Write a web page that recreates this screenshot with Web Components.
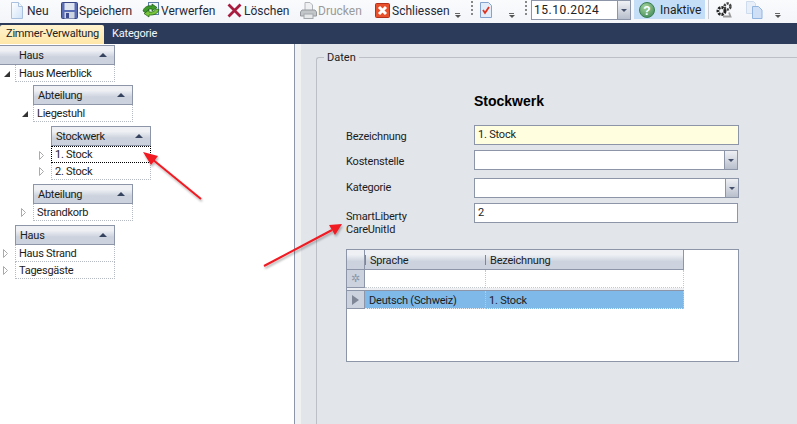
<!DOCTYPE html>
<html>
<head>
<meta charset="utf-8">
<style>
    html, body { margin: 0; padding: 0; }
    body {
        width: 797px;
        height: 424px;
        overflow: hidden;
        position: relative;
        font-family: Roboto, "Noto Sans", sans-serif;
        font-size: 12px;
        color: #1c1c1c;
        background: #e2e5ea;
        display: flex;
        flex-direction: column;
    }
    .arrows { position: absolute; left: 0; top: 0; pointer-events: none; }
</style>
</head>
<body>
<app-toolbar>
    <tool-button label="Neu" icon="new" w="52" style="margin-left:7px"></tool-button>
    <tool-button label="Speichern" icon="save" w="82"></tool-button>
    <tool-button label="Verwerfen" icon="undo" w="83"></tool-button>
    <tool-button label="Löschen" icon="del" w="74"></tool-button>
    <tool-button label="Drucken" icon="print" w="74" disabled></tool-button>
    <tool-button label="Schliessen" icon="close" w="83"></tool-button>
    <tool-grip></tool-grip>
    <tool-sep style="margin-left:10px"></tool-sep>
    <tool-button icon="check" w="20" style="margin-left:3px"></tool-button>
    <tool-grip style="margin-left:13px"></tool-grip>
    <tool-sep style="margin-left:10px"></tool-sep>
    <date-combo value="15.10.2024" style="margin-left:4px"></date-combo>
    <status-button label="Inaktive" style="margin-left:3px"></status-button>
    <tool-line></tool-line>
    <tool-button icon="gears" w="20" style="margin-left:5px"></tool-button>
    <tool-button icon="copy" w="20" style="margin-left:10px"></tool-button>
    <tool-grip style="margin-left:11px"></tool-grip>
</app-toolbar>
<tab-strip>
    <tab-item active>Zimmer-Verwaltung</tab-item>
    <tab-item>Kategorie</tab-item>
</tab-strip>
<main-split>
    <tree-view slot="left">
        <tree-band label="Haus" bleed>
            <tree-row label="Haus Meerblick" state="open">
                <tree-band label="Abteilung" style="margin-top:3px">
                    <tree-row label="Liegestuhl" state="open">
                        <tree-band label="Stockwerk" style="margin-top:4px">
                            <tree-row label="1. Stock" state="closed" focused></tree-row>
                            <tree-row label="2. Stock" state="closed"></tree-row>
                        </tree-band>
                    </tree-row>
                </tree-band>
                <tree-band label="Abteilung" style="margin-top:4px">
                    <tree-row label="Strandkorb" state="closed"></tree-row>
                </tree-band>
            </tree-row>
        </tree-band>
        <tree-band label="Haus" style="margin-top:4px">
            <tree-row label="Haus Strand" state="closed"></tree-row>
            <tree-row label="Tagesgäste" state="closed"></tree-row>
        </tree-band>
    </tree-view>
    <data-panel slot="right">
        <form-title>Stockwerk</form-title>
        <form-row label="Bezeichnung" top="0" lh="24" width="265"><text-box value="1. Stock" required></text-box></form-row>
        <form-row label="Kostenstelle" top="5" lh="24" width="264"><text-box combo></text-box></form-row>
        <form-row label="Kategorie" top="8" lh="20" width="265"><text-box combo></text-box></form-row>
        <form-row label="SmartLiberty CareUnitId" top="5" lh="13" width="264" wrap><text-box value="2"></text-box></form-row>
        <lang-grid></lang-grid>
    </data-panel>
</main-split>

<svg class="arrows" width="797" height="424" viewBox="0 0 797 424">
    <defs>
        <filter id="sh" x="-20%" y="-20%" width="140%" height="140%">
            <feDropShadow dx="1" dy="2" stdDeviation="1.2" flood-color="#000" flood-opacity="0.3"/>
        </filter>
    </defs>
    <g filter="url(#sh)">
        <line x1="201" y1="199" x2="152" y2="159" stroke="#f01a22" stroke-width="2"/>
        <polygon points="143,152 158,156 151,165" fill="#f01a22"/>
        <line x1="264" y1="266" x2="332" y2="230" stroke="#f01a22" stroke-width="2"/>
        <polygon points="342,224 335,235 329,225" fill="#f01a22"/>
    </g>
</svg>

<script>
const ICONS = {
    new: `<svg width="14" height="17" viewBox="0 0 14 17"><defs><linearGradient id="n" x1="0" y1="0" x2="1" y2="1"><stop offset="0" stop-color="#fff"/><stop offset="1" stop-color="#cfe2f7"/></linearGradient></defs><path d="M1.500.5h7l4 4v12h-11z" fill="url(#n)" stroke="#a9c1de"/><path d="M8.500.5v4h4" fill="#f4f8fd" stroke="#a9c1de"/></svg>`,
    save: `<svg width="17" height="17" viewBox="0 0 17 17"><rect x=".5" y=".5" width="16" height="16" rx="1" fill="#5a6db4" stroke="#3a4786"/><rect x="3.500" y="1" width="10" height="7" fill="#dfe5f0"/><rect x="3.500" y="10" width="10" height="6.500" fill="#cfd5e0"/><rect x="5" y="11" width="3" height="5" fill="#3f4d90"/></svg>`,
    undo: `<svg width="18" height="16" viewBox="0 0 18 16"><rect x="6.500" y=".5" width="10" height="12" fill="#eef4fb" stroke="#5f7fa8"/><path d="M1 9c1-4 5-6 9-5V2l5 3.500-5 3.500V7C7 6.500 5 8 4 11z" fill="#3f9a2c" stroke="#17590f" stroke-width=".7"/><path d="M17 7.500c-1 4-5 6-10 5.500v2L2 11.500 7 8v2c4 .5 6-1 7-3z" fill="#78c43c" stroke="#17590f" stroke-width=".7"/></svg>`,
    del: `<svg width="15" height="15" viewBox="0 0 15 15"><path d="M1.500 1.500l12 12M13.500 1.500l-12 12" stroke="#a81c40" stroke-width="2.800"/></svg>`,
    print: `<svg width="17" height="17" viewBox="0 0 17 17"><path d="M5 .5h5l2.500 2.500v6H5z" fill="#eef0f2" stroke="#b2b6ba"/><path d="M2 8h13l1.500 2v4H.5v-4z" fill="#c3c6c9" stroke="#94989c"/><rect x="4" y="12" width="9" height="4.500" fill="#e6e8ea" stroke="#a4a8ac"/></svg>`,
    close: `<svg width="15" height="15" viewBox="0 0 15 15"><rect x=".5" y=".5" width="14" height="14" rx="1" fill="#e8502b" stroke="#b5301a"/><path d="M4 4l7 7M11 4l-7 7" stroke="#fff" stroke-width="3"/></svg>`,
    check: `<svg width="12" height="16" viewBox="0 0 12 16"><path d="M.5.5h8l3 3v12H.5z" fill="#e3edf9" stroke="#86a3cd"/><path d="M3 8l2 3 4-6" fill="none" stroke="#e0331f" stroke-width="1.800"/></svg>`,
    gears: `<svg width="18" height="18" viewBox="0 0 18 18"><circle cx="6.500" cy="10" r="3.500" fill="none" stroke="#222" stroke-width="3" stroke-dasharray="2.200 1"/><circle cx="12.500" cy="5.500" r="3" fill="none" stroke="#444" stroke-width="2.500" stroke-dasharray="2.200 1"/><path d="M8 15.500h7.500l-1.500-4" fill="none" stroke="#9a9a9a" stroke-width="1.800"/></svg>`,
    copy: `<svg width="17" height="18" viewBox="0 0 17 18"><path d="M.5.5h7l2 2v10h-9z" fill="#e8eff9" stroke="#cfdcee"/><path d="M6.500 5.500h6l3.500 3.500v8.500H6.500z" fill="#cfe0f6" stroke="#92b5e0"/></svg>`
};

// toolbar strip
class AppToolbar extends HTMLElement {
    constructor() {
        super();
        this.attachShadow({ mode: 'open' });
        this.shadowRoot.innerHTML = `
            <style>
                :host { display: flex; align-items: flex-start; height: 23px; flex: none;
                    background: linear-gradient(#fafbfd, #f3f5f9); box-sizing: border-box; }
            </style>
            <slot></slot>`;
    }
}
customElements.define('app-toolbar', AppToolbar);

class ToolButton extends HTMLElement {
    constructor() {
        super();
        this.attachShadow({ mode: 'open' });
    }
    connectedCallback() {
        const label = this.getAttribute('label');
        const icon = ICONS[this.getAttribute('icon')] || '';
        const color = this.hasAttribute('disabled') ? '#9a9a9a' : '#1f2a38';
        this.shadowRoot.innerHTML = `
            <style>
                :host { display: flex; align-items: center; height: 20px; width: ${this.getAttribute('w')}px; flex: none; color: ${color}; font-size: 12px; white-space: nowrap; }
                .i { width: 20px; display: flex; justify-content: center; flex: none; }
                span { padding-top: 2px; }
                svg { display: block; }
            </style>
            <div class="i">${icon}</div>${label ? `<span>${label}</span>` : ''}`;
    }
}
customElements.define('tool-button', ToolButton);

class ToolGrip extends HTMLElement {
    constructor() {
        super();
        this.attachShadow({ mode: 'open' });
        this.shadowRoot.innerHTML = `
            <style>
                :host { display: block; width: 6px; height: 20px; position: relative; flex: none; }
                i { position: absolute; left: 0; width: 5px; background: #666; height: 1px; top: 13px; }
                b { position: absolute; left: 0; top: 15px; border: 3px solid transparent; border-top: 3px solid #555; border-bottom: 0; }
            </style>
            <i></i><b></b>`;
    }
}
customElements.define('tool-grip', ToolGrip);

class ToolSep extends HTMLElement {
    constructor() {
        super();
        this.attachShadow({ mode: 'open' });
        this.shadowRoot.innerHTML = `
            <style>
                :host { display: block; width: 2px; height: 15px; margin-top: 1px; flex: none;
                    background: repeating-linear-gradient(#888 0 2px, transparent 2px 4px); }
            </style>`;
    }
}
customElements.define('tool-sep', ToolSep);

class ToolLine extends HTMLElement {
    constructor() {
        super();
        this.attachShadow({ mode: 'open' });
        this.shadowRoot.innerHTML = `
            <style>
                :host { display: block; width: 1px; height: 19px; margin-left: 3px; background: #c9ccd2; flex: none; }
            </style>`;
    }
}
customElements.define('tool-line', ToolLine);

class DateCombo extends HTMLElement {
    constructor() {
        super();
        this.attachShadow({ mode: 'open' });
    }
    connectedCallback() {
        this.shadowRoot.innerHTML = `
            <style>
                :host { display: flex; width: 100px; height: 20px; box-sizing: border-box; background: #fff; flex: none;
                    border: 1px solid #8c96a8; font-size: 12px; color: #222; letter-spacing: .5px; }
                span { flex: 1; padding: 0 0 0 2px; line-height: 18px; }
                b { width: 12px; border-left: 1px solid #8c96a8; background: linear-gradient(#f0f2f5, #b8bfcc);
                    display: flex; align-items: center; justify-content: center; }
                b::after { content: ""; border: 3px solid transparent; border-top: 3px solid #44506c; border-bottom: 0; }
            </style>
            <span>${this.getAttribute('value')}</span><b></b>`;
    }
}
customElements.define('date-combo', DateCombo);

class StatusButton extends HTMLElement {
    constructor() {
        super();
        this.attachShadow({ mode: 'open' });
    }
    connectedCallback() {
        this.shadowRoot.innerHTML = `
            <style>
                :host { display: flex; align-items: center; width: 71px; height: 19px; box-sizing: border-box; padding-left: 5px; gap: 5px; flex: none;
                    background: #c4def8; color: #222; font-size: 12px; }
                span { padding-top: 1px; }
                svg { display: block; }
            </style>
            <svg width="16" height="16" viewBox="0 0 16 16"><defs><radialGradient id="q" cx=".4" cy=".3" r=".8"><stop offset="0" stop-color="#a7d49a"/><stop offset="1" stop-color="#3f8a5a"/></radialGradient></defs><circle cx="8" cy="8" r="7.500" fill="url(#q)" stroke="#3b7f52"/><text x="8" y="12.500" text-anchor="middle" font-family="Liberation Sans" font-size="12" font-weight="bold" fill="#fff">?</text></svg>
            <span>${this.getAttribute('label')}</span>`;
    }
}
customElements.define('status-button', StatusButton);

class TabStrip extends HTMLElement {
    constructor() {
        super();
        this.attachShadow({ mode: 'open' });
        this.shadowRoot.innerHTML = `
            <style>
                :host { display: flex; align-items: flex-end; height: 21px; flex: none; background: #2b3b59; box-sizing: border-box; padding-top: 2px; }
            </style>
            <slot></slot>`;
    }
}
customElements.define('tab-strip', TabStrip);

class TabItem extends HTMLElement {
    constructor() {
        super();
        this.attachShadow({ mode: 'open' });
        this.shadowRoot.innerHTML = `
            <style>
                :host { display: block; height: 19px; line-height: 18px; padding: 0 8px; font-size: 11px; letter-spacing: -.2px; color: #f4f6fa; white-space: nowrap; }
                :host([active]) { width: 104px; box-sizing: border-box; padding: 0 0 0 6px; background: linear-gradient(#fff3cf, #ffe7a8); color: #222;
                    border-radius: 2px 2px 0 0; }
            </style>
            <slot></slot>`;
    }
}
customElements.define('tab-item', TabItem);

class MainSplit extends HTMLElement {
    constructor() {
        super();
        this.attachShadow({ mode: 'open' });
        this.shadowRoot.innerHTML = `
            <style>
                :host { display: flex; flex: 1; min-height: 0; }
                .left { width: 294px; background: #fff; border-right: 1px solid #8c96a8; flex: none; overflow: hidden; }
                .bar { width: 6px; background: #f0f1f3; flex: none; }
                .right { flex: 1; background: #e2e5ea; }
            </style>
            <div class="left"><slot name="left"></slot></div>
            <div class="bar"></div>
            <div class="right"><slot name="right"></slot></div>`;
    }
}
customElements.define('main-split', MainSplit);

class TreeView extends HTMLElement {
    constructor() {
        super();
        this.attachShadow({ mode: 'open' });
        this.shadowRoot.innerHTML = `
            <style>
                :host { display: block; padding: 1px 0 0 15px; font-size: 11px; letter-spacing: -.25px; color: #1c1c1c; }
            </style>
            <slot></slot>`;
    }
}
customElements.define('tree-view', TreeView);

class TreeBand extends HTMLElement {
    constructor() {
        super();
        this.attachShadow({ mode: 'open' });
    }
    connectedCallback() {
        this.shadowRoot.innerHTML = `
            <style>
                :host { display: block; }
                .head { width: 100px; height: 20px; box-sizing: border-box; border: 1px solid #8c96a8; position: relative;
                    background: linear-gradient(#eef0f4 0 25%, #cdd3de 60%); line-height: 20px; padding-left: 4px; }
                .head::after { content: ""; position: absolute; right: 7px; top: 7px; border: 4px solid transparent; border-bottom: 4px solid #36435e; border-top: 0; }
                :host([bleed]) .head { margin-left: -15px; width: 115px; padding-left: 19px; border-left: 0; }
            </style>
            <div class="head">${this.getAttribute('label')}</div>
            <slot></slot>`;
    }
}
customElements.define('tree-band', TreeBand);

class TreeRow extends HTMLElement {
    constructor() {
        super();
        this.attachShadow({ mode: 'open' });
    }
    connectedCallback() {
        const state = this.getAttribute('state');
        const mark = state === 'open'
            ? '<svg class="ex o" width="6" height="6" viewBox="0 0 6 6"><polygon points="6,0 6,6 0,6" fill="#333"/></svg>'
            : '<svg class="ex" width="5" height="9" viewBox="0 0 5 9"><polygon points=".5,.5 4.500,4.500 .5,8.500" fill="#fff" stroke="#aaa"/></svg>';
        this.shadowRoot.innerHTML = `
            <style>
                :host { display: block; position: relative; }
                .row { width: 100px; height: 17px; box-sizing: border-box; line-height: 17px; padding-left: 3px; position: relative;
                    border: 1px dotted #b5bac3; border-top: 0; }
                :host([focused]) .row { border: 1px dotted #000; line-height: 16px; }
                .ex { position: absolute; left: -13px; top: 4px; }
                .ex.o { left: -12px; top: 6px; }
                .kids { padding-left: 18px; }
            </style>
            <div class="row">${mark}${this.getAttribute('label')}</div>
            <div class="kids"><slot></slot></div>`;
    }
}
customElements.define('tree-row', TreeRow);

class DataPanel extends HTMLElement {
    constructor() {
        super();
        this.attachShadow({ mode: 'open' });
        this.shadowRoot.innerHTML = `
            <style>
                :host { display: block; height: 380px; box-sizing: border-box; padding: 13px 0 0 15px; overflow: hidden; }
                .box { position: relative; height: 400px; box-sizing: border-box; border: 1px solid #bcc0c6; border-radius: 3px 0 0 0; border-right: 0; border-bottom: 0; padding: 0 0 0 29px; }
                .legend { position: absolute; left: 7px; top: -7px; padding: 0 3px; background: #e2e5ea; font-size: 11px; line-height: 14px; }
            </style>
            <div class="box"><span class="legend">Daten</span><slot></slot></div>`;
    }
}
customElements.define('data-panel', DataPanel);

class FormTitle extends HTMLElement {
    constructor() {
        super();
        this.attachShadow({ mode: 'open' });
        this.shadowRoot.innerHTML = `
            <style>
                :host { display: block; margin: 36px 0 16px 128px; height: 15px; font: bold 14px/15px "Liberation Sans", sans-serif; color: #000; }
            </style>
            <slot></slot>`;
    }
}
customElements.define('form-title', FormTitle);

class FormRow extends HTMLElement {
    constructor() {
        super();
        this.attachShadow({ mode: 'open' });
    }
    connectedCallback() {
        const wrap = this.hasAttribute('wrap');
        this.shadowRoot.innerHTML = `
            <style>
                :host { display: flex; margin-top: ${this.getAttribute('top')}px; height: 20px; font-size: 11px; letter-spacing: -.2px; }
                .lab { width: 128px; flex: none; line-height: ${this.getAttribute('lh')}px; padding-top: ${wrap ? 7 : 0}px; white-space: ${wrap ? 'normal' : 'nowrap'}; }
                .lab span { display: block; width: 80px; }
                .f { width: ${this.getAttribute('width')}px; flex: none; }
            </style>
            <div class="lab"><span>${this.getAttribute('label')}</span></div>
            <div class="f"><slot></slot></div>`;
    }
}
customElements.define('form-row', FormRow);

class TextBox extends HTMLElement {
    constructor() {
        super();
        this.attachShadow({ mode: 'open' });
    }
    connectedCallback() {
        const combo = this.hasAttribute('combo');
        this.shadowRoot.innerHTML = `
            <style>
                :host { display: flex; height: 20px; box-sizing: border-box; border: 1px solid #8c96a8; background: #fff; font-size: 11px; color: #1c1c1c; }
                :host([required]) { background: #ffffe0; }
                span { flex: 1; padding-left: 3px; line-height: 18px; }
                b { width: 12px; border-left: 1px solid #8c96a8; background: linear-gradient(#eef0f4, #b8bfcc);
                    display: flex; align-items: center; justify-content: center; }
                b::after { content: ""; border: 3px solid transparent; border-top: 3px solid #44506c; border-bottom: 0; }
            </style>
            <span>${this.getAttribute('value') || ''}</span>${combo ? '<b></b>' : ''}`;
    }
}
customElements.define('text-box', TextBox);

class LangGrid extends HTMLElement {
    constructor() {
        super();
        this.attachShadow({ mode: 'open' });
        this.shadowRoot.innerHTML = `
            <style>
                :host { display: block; width: 393px; height: 113px; margin-top: 26px; box-sizing: border-box; border: 1px solid #8c96a8; background: #fff; font-size: 11px; letter-spacing: -.2px; color: #1c1c1c; }
                .t { display: grid; grid-template-columns: 18px 120px 199px; grid-template-rows: 20px 18px 3px 18px; width: 337px; }
                .h { background: linear-gradient(#eef0f4 0 25%, #cdd3de 60%); border-bottom: 1px solid #8c96a8; border-right: 1px solid #8c96a8; line-height: 21px; padding-left: 5px; box-sizing: border-box; position: relative; }
                .h + .h { border-right: 0; }
                .h + .h::before { content: ""; position: absolute; left: 0; top: 5px; height: 10px; width: 1px; background: #7d8799; }
                .h + .h + .h { border-right: 1px solid #8c96a8; }
                .rh { background: #cdd3de; border-right: 1px solid #8c96a8; border-bottom: 1px solid #8c96a8; box-sizing: border-box; color: #8c96a8; display: flex; align-items: center; justify-content: center; padding: 0; }
                .c { border: 1px dotted #c3c7ce; border-width: 0 0 1px 0; box-sizing: border-box; line-height: 19px; padding-left: 4px; }
                .c + .c { border-left: 1px dotted #c3c7ce; padding-left: 3px; }
                .c:last-child, .new { border-right: 1px dotted #c3c7ce; }
                .band { grid-column: 1 / 4; background: #eceef2; border-bottom: 1px solid #8c96a8; box-sizing: border-box; }
                .sel { background: #7fb9ea; border-color: #e8eef6; }
                .arrow { border: 5px solid transparent; border-left: 7px solid #7f8796; border-right: 0; }
            </style>
            <div class="t">
                <div class="h" style="padding:0"></div><div class="h">Sprache</div><div class="h">Bezeichnung</div>
                <div class="rh">✲</div><div class="c"></div><div class="c new"></div>
                <div class="band"></div>
                <div class="rh"><i class="arrow"></i></div><div class="c sel">Deutsch (Schweiz)</div><div class="c sel">1. Stock</div>
            </div>`;
    }
}
customElements.define('lang-grid', LangGrid);
</script>
</body>
</html>
